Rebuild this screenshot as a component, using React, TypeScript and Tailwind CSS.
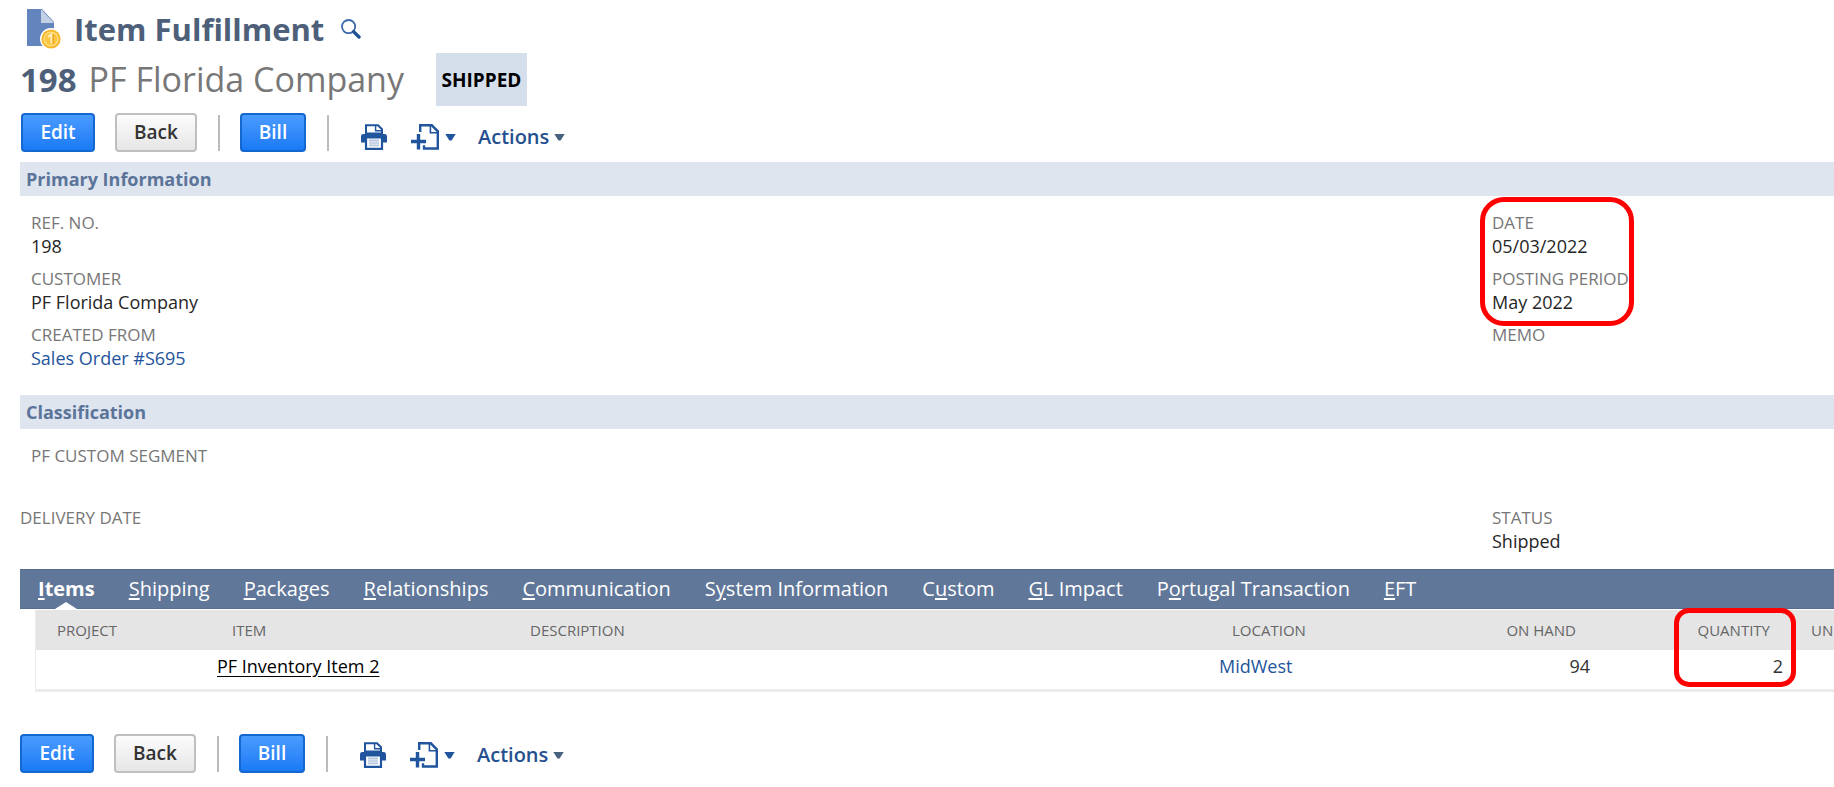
import type { ReactNode } from "react";

function RecordIcon() {
  return (
    <svg className="h-10 w-9 shrink-0" viewBox="0 0 36 40" aria-hidden="true">
      <path d="M1 0h15l12 13v24H1z" fill="#6384bd" />
      <path d="M15 0l13 14H15z" fill="#c3d0e6" />
      <circle cx="25" cy="30" r="11" fill="#fff" />
      <circle cx="25" cy="30" r="9.6" fill="#f8b62b" />
      <circle cx="25" cy="30" r="6.9" fill="#fbc540" stroke="#fde08a" strokeWidth="1.4" />
      <path d="M22 28l3.4-2.6v9.2" fill="none" stroke="#fff0c2" strokeWidth="1.8" />
      <path d="M27.2 25.6v9.2" stroke="#f0a826" strokeWidth="1.4" />
    </svg>
  );
}

function SearchIcon() {
  return (
    <svg className="h-5 w-5" viewBox="0 0 20 20" aria-hidden="true">
      <circle cx="7.6" cy="7.6" r="6.6" fill="none" stroke="#3b69ab" strokeWidth="1.8" />
      <path d="M12.6 12.6l5.4 5.4" stroke="#1f5199" strokeWidth="3.4" strokeLinecap="round" />
    </svg>
  );
}

function PrinterIcon() {
  return (
    <svg className="h-[26px] w-[26px]" viewBox="0 0 26 26" aria-hidden="true">
      <path d="M5 9.5V1.2h12l4 4v4.3" fill="#fff" stroke="#20549c" strokeWidth="2" />
      <path d="M14.6 1.6v5.2h6" fill="none" stroke="#20549c" strokeWidth="1.4" />
      <path
        d="M4 8.5h18v1.5h1.6A2.4 2.4 0 0 1 26 12.400v6.200h-4V14H4v4.600H0v-6.200A2.400 2.400 0 0 1 2.400 10H4z"
        fill="#20549c"
      />
      <path d="M5 13.500h16v11.300H5z" fill="#fff" stroke="#20549c" strokeWidth="2.200" />
      <path d="M8 15h10v7.500H8z" fill="#d9e2ef" />
      <path d="M8 16.500h10M8 19h10M8 21.500h10" stroke="#b4c5dd" strokeWidth="1" />
    </svg>
  );
}

function NewPageIcon() {
  return (
    <svg className="h-[26px] w-7" viewBox="0 0 28 26" aria-hidden="true">
      <path
        d="M9.200 8V1.300h11.600l6 6v17.200H13v-3.200"
        fill="none"
        stroke="#20549c"
        strokeWidth="2.400"
      />
      <path d="M19.400 2v6.800h6.800" fill="none" stroke="#20549c" strokeWidth="1.600" />
      <path d="M0 17.500h15M7.500 10v15.500" stroke="#20549c" strokeWidth="3.400" />
    </svg>
  );
}

function Caret({ dark = false }: { dark?: boolean }) {
  return (
    <svg className="h-[7px] w-[11px]" viewBox="0 0 11 7" aria-hidden="true">
      <path d="M0.300 0h10.400L6.600 6.400H4.400z" fill={dark ? "#47617f" : "#20549c"} />
    </svg>
  );
}

const primary =
  "h-[39px] rounded-[4px] border-2 border-[#1467cf] bg-linear-to-b from-[#4a9bff] to-[#187af4] text-[19px] font-semibold text-white";

function Toolbar({ iconOffset }: { iconOffset: "mt-[9px]" | "mt-[3px]" }) {
  return (
    <div className="flex h-[39px] items-center">
      <button className={`${primary} w-[74px]`}>Edit</button>
      <button className="ml-5 h-[39px] w-[82px] rounded-[4px] border-2 border-[#bfbfbf] bg-linear-to-b from-[#fcfcfc] to-[#e6e6e6] text-[19px] font-semibold text-[#333]">
        Back
      </button>
      <span className="ml-[21px] h-9 w-[2px] bg-[#bcbcbc]" />
      <button className={`${primary} ml-5 w-[66px]`}>Bill</button>
      <span className="ml-[21px] h-9 w-[2px] bg-[#bcbcbc]" />
      <div className={`${iconOffset} ml-8 flex items-center`}>
        <button aria-label="Print">
          <PrinterIcon />
        </button>
        <button className="ml-6 flex items-center gap-[6px]" aria-label="New">
          <NewPageIcon />
          <Caret />
        </button>
        <button className="ml-[22px] flex items-center gap-[5px] text-[20px] font-semibold text-[#24508f]">
          Actions
          <Caret dark />
        </button>
      </div>
    </div>
  );
}

function Band({ children }: { children: ReactNode }) {
  return (
    <h2 className="flex h-[34px] items-center bg-[#dfe5ef] pt-px pl-[6px] text-[18px] font-bold text-[#5b7499]">
      {children}
    </h2>
  );
}

function Field({ label, children }: { label: string; children?: ReactNode }) {
  return (
    <div>
      <dt className="h-[22px] text-[17px] leading-[22px] text-[#777]">{label}</dt>
      <dd className="h-6 text-[18px] leading-6 text-[#262626]">{children}</dd>
    </div>
  );
}

const tabs: [string, string, string][] = [
  ["", "I", "tems"],
  ["", "S", "hipping"],
  ["", "P", "ackages"],
  ["", "R", "elationships"],
  ["", "C", "ommunication"],
  ["S", "y", "stem Information"],
  ["C", "u", "stom"],
  ["", "G", "L Impact"],
  ["P", "o", "rtugal Transaction"],
  ["", "E", "FT"],
];

const twoColumns = "grid grid-cols-[minmax(0,1fr)_342px]";

export default function App() {
  return (
    <main className="overflow-hidden bg-white pt-2 pb-3 pl-5 font-['Open_Sans','Noto_Sans',sans-serif]">
      <header>
        <div className="flex h-[42px] items-center pl-[6px]">
          <RecordIcon />
          <h1 className="ml-3 text-[31px] leading-[42px] font-bold text-[#4d5f79]">
            Item Fulfillment
          </h1>
          <button className="ml-[17px]" aria-label="Search">
            <SearchIcon />
          </button>
        </div>
        <div className="mt-[3px] flex h-[53px] items-center">
          <span className="text-[33px] font-bold text-[#4d5f79]">198</span>
          <span className="ml-3 text-[34px] text-[#777]">PF Florida Company</span>
          <span className="ml-8 flex h-[53px] w-[91px] items-center justify-center bg-[#d5dfeb] pt-px text-[19px] font-bold text-black">
            SHIPPED
          </span>
        </div>
      </header>

      <div className="mt-[7px] pl-px">
        <Toolbar iconOffset="mt-[9px]" />
      </div>

      <section className="mt-[10px]">
        <Band>Primary Information</Band>
        <div className={`${twoColumns} h-[199px] pt-4`}>
          <dl className="flex flex-col gap-[10px] pl-[11px]">
            <Field label="REF. NO.">198</Field>
            <Field label="CUSTOMER">PF Florida Company</Field>
            <Field label="CREATED FROM">
              <a href="#sales-order" className="text-[#24549c]">
                Sales Order #S695
              </a>
            </Field>
          </dl>
          <dl className="relative flex flex-col gap-[10px]">
            <Field label="DATE">05/03/2022</Field>
            <Field label="POSTING PERIOD">May 2022</Field>
            <Field label="MEMO" />
            <div className="pointer-events-none absolute -top-[15px] -left-3 h-[129px] w-[154px] rounded-[24px] border-[5px] border-[#ff0000]" />
          </dl>
        </div>
      </section>

      <section>
        <Band>Classification</Band>
        <dl className="pt-4 pl-[11px]">
          <Field label="PF CUSTOM SEGMENT" />
        </dl>
      </section>

      <div className={`${twoColumns} mt-4`}>
        <dl>
          <Field label="DELIVERY DATE" />
        </dl>
        <dl>
          <Field label="STATUS">Shipped</Field>
        </dl>
      </div>

      <nav className="mt-4 flex h-10 items-center gap-[34px] border-y border-[#566d8f] bg-[#607799] pl-[18px] text-[20px] text-white">
        {tabs.map(([before, key, after], i) => (
          <a
            key={before + key + after}
            href="#tab"
            className={
              i === 0
                ? "relative flex h-full items-center font-bold whitespace-nowrap"
                : "flex h-full items-center whitespace-nowrap"
            }
          >
            <span>
              {before}
              <span className="underline underline-offset-2">{key}</span>
              {after}
            </span>
            {i === 0 && (
              <svg
                className="absolute -bottom-px left-1/2 h-[7px] w-[22px] -translate-x-1/2"
                viewBox="0 0 22 7"
                aria-hidden="true"
              >
                <path d="M0 7L11 0l11 7z" fill="#fff" />
              </svg>
            )}
          </a>
        ))}
      </nav>

      <div className="relative mt-px ml-[15px]">
        <div className="overflow-hidden border-b-3 border-l border-[#ebebeb]">
          <table className="w-full table-fixed border-collapse text-left">
            <colgroup>
              <col className="w-[174px]" />
              <col className="w-[298px]" />
              <col />
              <col className="w-[179px]" />
              <col className="w-[209px]" />
              <col className="w-[194px]" />
              <col className="w-[42px]" />
            </colgroup>
            <thead className="bg-[#e5e5e5]">
              <tr className="h-10 text-[15px] text-[#666]">
                <th className="pl-[21px] font-normal">PROJECT</th>
                <th className="pl-[22px] font-normal">ITEM</th>
                <th className="pl-[22px] font-normal">DESCRIPTION</th>
                <th className="pl-[22px] font-normal">LOCATION</th>
                <th className="pr-[22px] text-right font-normal">ON HAND</th>
                <th className="pr-[22px] text-right font-normal">QUANTITY</th>
                <th className="pl-[19px] font-normal">UN</th>
              </tr>
            </thead>
            <tbody>
              <tr className="h-[39px] text-[18px] text-[#333]">
                <td />
                <td className="pb-[6px] pl-[7px]">
                  <a href="#item" className="text-black underline underline-offset-3">
                    PF Inventory Item 2
                  </a>
                </td>
                <td />
                <td className="pb-[6px] pl-[9px]">
                  <a href="#location" className="text-[#24549c]">
                    MidWest
                  </a>
                </td>
                <td className="pr-2 pb-[6px] text-right">94</td>
                <td className="pr-[9px] pb-[6px] text-right">2</td>
                <td />
              </tr>
            </tbody>
          </table>
        </div>
        <div className="pointer-events-none absolute -top-[2px] right-[38px] h-[79px] w-[122px] rounded-[15px] border-[5px] border-[#ff0000]" />
      </div>

      <div className="mt-[42px]">
        <Toolbar iconOffset="mt-[3px]" />
      </div>
    </main>
  );
}
